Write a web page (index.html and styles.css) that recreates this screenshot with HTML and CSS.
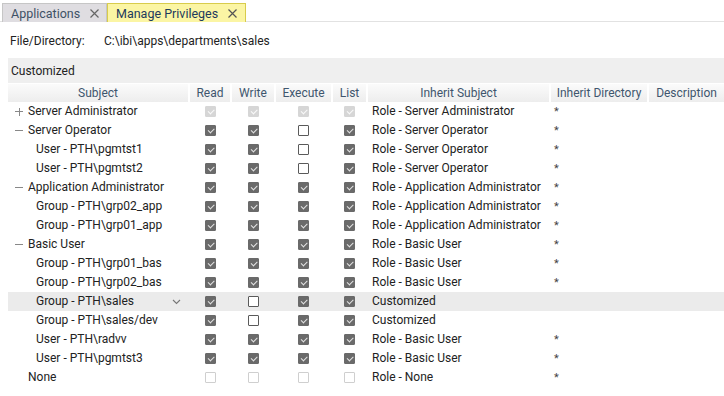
FILE: index.html
```html
<!DOCTYPE html>
<html lang="en">
<head>
    <meta charset="UTF-8">
    <title>Manage Privileges</title>
    <link rel="stylesheet" href="styles.css">
</head>
<body>
    <div class="tabs">
        <div class="tab">
            <span class="tab-label">Applications</span>
            <svg class="tab-close" width="9" height="9" viewBox="0 0 9 9"><path d="M0.5 0.5L8.5 8.5M8.5 0.5L0.5 8.5" stroke="#666" stroke-width="1.2" fill="none"/></svg>
        </div>
        <div class="tab active">
            <span class="tab-label">Manage Privileges</span>
            <svg class="tab-close" width="9" height="9" viewBox="0 0 9 9"><path d="M0.5 0.5L8.5 8.5M8.5 0.5L0.5 8.5" stroke="#555" stroke-width="1.2" fill="none"/></svg>
        </div>
    </div>

    <div class="file-row">
        <span class="file-label">File/Directory:</span>
        <span class="file-path">C:\ibi\apps\departments\sales</span>
    </div>

    <div class="panel">
        <div class="panel-title">Customized</div>

        <div class="grid head">
            <div>Subject</div>
            <div>Read</div>
            <div>Write</div>
            <div>Execute</div>
            <div>List</div>
            <div>Inherit Subject</div>
            <div>Inherit Directory</div>
            <div>Description</div>
        </div>

        <div class="grid row">
            <div class="subj lvl0"><span class="tog plus"></span>Server Administrator</div>
            <div class="c"><span class="cb dis on"></span></div>
            <div class="c"><span class="cb dis on"></span></div>
            <div class="c"><span class="cb dis on"></span></div>
            <div class="c"><span class="cb dis on"></span></div>
            <div class="inh">Role - Server Administrator</div>
            <div class="dir">*</div>
            <div></div>
        </div>
        <div class="grid row">
            <div class="subj lvl0"><span class="tog minus"></span>Server Operator</div>
            <div class="c"><span class="cb on"></span></div>
            <div class="c"><span class="cb on"></span></div>
            <div class="c"><span class="cb"></span></div>
            <div class="c"><span class="cb on"></span></div>
            <div class="inh">Role - Server Operator</div>
            <div class="dir">*</div>
            <div></div>
        </div>
        <div class="grid row">
            <div class="subj lvl1">User - PTH\pgmtst1</div>
            <div class="c"><span class="cb on"></span></div>
            <div class="c"><span class="cb on"></span></div>
            <div class="c"><span class="cb"></span></div>
            <div class="c"><span class="cb on"></span></div>
            <div class="inh">Role - Server Operator</div>
            <div class="dir">*</div>
            <div></div>
        </div>
        <div class="grid row">
            <div class="subj lvl1">User - PTH\pgmtst2</div>
            <div class="c"><span class="cb on"></span></div>
            <div class="c"><span class="cb on"></span></div>
            <div class="c"><span class="cb"></span></div>
            <div class="c"><span class="cb on"></span></div>
            <div class="inh">Role - Server Operator</div>
            <div class="dir">*</div>
            <div></div>
        </div>
        <div class="grid row">
            <div class="subj lvl0"><span class="tog minus"></span>Application Administrator</div>
            <div class="c"><span class="cb on"></span></div>
            <div class="c"><span class="cb on"></span></div>
            <div class="c"><span class="cb on"></span></div>
            <div class="c"><span class="cb on"></span></div>
            <div class="inh">Role - Application Administrator</div>
            <div class="dir">*</div>
            <div></div>
        </div>
        <div class="grid row">
            <div class="subj lvl1">Group - PTH\grp02_app</div>
            <div class="c"><span class="cb on"></span></div>
            <div class="c"><span class="cb on"></span></div>
            <div class="c"><span class="cb on"></span></div>
            <div class="c"><span class="cb on"></span></div>
            <div class="inh">Role - Application Administrator</div>
            <div class="dir">*</div>
            <div></div>
        </div>
        <div class="grid row">
            <div class="subj lvl1">Group - PTH\grp01_app</div>
            <div class="c"><span class="cb on"></span></div>
            <div class="c"><span class="cb on"></span></div>
            <div class="c"><span class="cb on"></span></div>
            <div class="c"><span class="cb on"></span></div>
            <div class="inh">Role - Application Administrator</div>
            <div class="dir">*</div>
            <div></div>
        </div>
        <div class="grid row">
            <div class="subj lvl0"><span class="tog minus"></span>Basic User</div>
            <div class="c"><span class="cb on"></span></div>
            <div class="c"><span class="cb on"></span></div>
            <div class="c"><span class="cb on"></span></div>
            <div class="c"><span class="cb on"></span></div>
            <div class="inh">Role - Basic User</div>
            <div class="dir">*</div>
            <div></div>
        </div>
        <div class="grid row">
            <div class="subj lvl1">Group - PTH\grp01_bas</div>
            <div class="c"><span class="cb on"></span></div>
            <div class="c"><span class="cb on"></span></div>
            <div class="c"><span class="cb on"></span></div>
            <div class="c"><span class="cb on"></span></div>
            <div class="inh">Role - Basic User</div>
            <div class="dir">*</div>
            <div></div>
        </div>
        <div class="grid row">
            <div class="subj lvl1">Group - PTH\grp02_bas</div>
            <div class="c"><span class="cb on"></span></div>
            <div class="c"><span class="cb on"></span></div>
            <div class="c"><span class="cb on"></span></div>
            <div class="c"><span class="cb on"></span></div>
            <div class="inh">Role - Basic User</div>
            <div class="dir">*</div>
            <div></div>
        </div>
        <div class="grid row selected">
            <div class="subj lvl1">Group - PTH\sales
                <svg class="chevron" width="9" height="6" viewBox="0 0 9 6"><path d="M1 1L4.5 4.5L8 1" stroke="#777" stroke-width="1.1" fill="none"/></svg>
            </div>
            <div class="c"><span class="cb on"></span></div>
            <div class="c"><span class="cb"></span></div>
            <div class="c"><span class="cb on"></span></div>
            <div class="c"><span class="cb on"></span></div>
            <div class="inh">Customized</div>
            <div class="dir"></div>
            <div></div>
        </div>
        <div class="grid row">
            <div class="subj lvl1">Group - PTH\sales/dev</div>
            <div class="c"><span class="cb on"></span></div>
            <div class="c"><span class="cb"></span></div>
            <div class="c"><span class="cb on"></span></div>
            <div class="c"><span class="cb on"></span></div>
            <div class="inh">Customized</div>
            <div class="dir"></div>
            <div></div>
        </div>
        <div class="grid row">
            <div class="subj lvl1">User - PTH\radvv</div>
            <div class="c"><span class="cb on"></span></div>
            <div class="c"><span class="cb on"></span></div>
            <div class="c"><span class="cb on"></span></div>
            <div class="c"><span class="cb on"></span></div>
            <div class="inh">Role - Basic User</div>
            <div class="dir">*</div>
            <div></div>
        </div>
        <div class="grid row">
            <div class="subj lvl1">User - PTH\pgmtst3</div>
            <div class="c"><span class="cb on"></span></div>
            <div class="c"><span class="cb on"></span></div>
            <div class="c"><span class="cb on"></span></div>
            <div class="c"><span class="cb on"></span></div>
            <div class="inh">Role - Basic User</div>
            <div class="dir">*</div>
            <div></div>
        </div>
        <div class="grid row">
            <div class="subj lvl0">None</div>
            <div class="c"><span class="cb dis"></span></div>
            <div class="c"><span class="cb dis"></span></div>
            <div class="c"><span class="cb dis"></span></div>
            <div class="c"><span class="cb dis"></span></div>
            <div class="inh">Role - None</div>
            <div class="dir">*</div>
            <div></div>
        </div>
    </div>
</body>
</html>
```

FILE: styles.css
```css
body {
    margin: 0;
    font-family: Roboto, "Liberation Sans", sans-serif;
    font-size: 12px;
    color: #222;
    background: #fff;
    overflow: hidden;
}

/* Tab strip */
.tabs {
    display: flex;
    height: 22px;
    box-sizing: border-box;
    padding: 3px 0 0 2px;
    border-bottom: 1px solid #e2e2e2;
}

.tab {
    display: flex;
    align-items: center;
    justify-content: space-between;
    box-sizing: border-box;
    width: 105px;
    height: 19px;
    padding: 0 7px 0 8px;
    background: #dfdde1;
    border: 1px solid #c6c6c6;
    border-bottom: none;
    color: #3e5266;
    font-size: 12.5px;
}

.tab.active {
    width: 139px;
    padding-right: 8px;
    background: #fbf5a4;
    border-color: #d8cc4c;
    color: #1e3a5c;
}

.tab-close {
    display: block;
}

/* File row */
.file-row {
    display: flex;
    box-sizing: border-box;
    height: 36px;
    padding: 11px 10px 0;
    line-height: 16px;
}

.file-label {
    width: 94px;
}

/* Privileges panel */
.panel {
    margin-left: 8px;
}

.panel-title {
    height: 25px;
    line-height: 26px;
    padding-left: 3px;
    background: #efefef;
}

.grid {
    display: grid;
    grid-template-columns: 180px 40px 42px 55px 33px 181px 96px 1fr;
    column-gap: 2px;
}

.head {
    margin-top: 1px;
    height: 18px;
}

.head > div {
    background: linear-gradient(#fbfbfb, #ededed);
    color: #3f566e;
    text-align: center;
    line-height: 18px;
    white-space: nowrap;
    overflow: hidden;
}

.row {
    height: 19px;
    line-height: 19px;
}

.row.selected {
    background: #ebebeb;
}

.row > div {
    white-space: nowrap;
}

.subj {
    display: flex;
    align-items: center;
    position: relative;
}

.lvl0 {
    padding-left: 20px;
}

.lvl1 {
    padding-left: 28px;
}

.tog {
    position: absolute;
    left: 7px;
    top: 9px;
    width: 8px;
    height: 1px;
    background: #888;
}

.tog.plus::after {
    content: "";
    position: absolute;
    left: 3.5px;
    top: -3.5px;
    width: 1px;
    height: 8px;
    background: #888;
}

.chevron {
    position: absolute;
    left: 164px;
    top: 7px;
}

.c {
    display: flex;
    align-items: center;
    justify-content: center;
}

.inh {
    padding-left: 4px;
}

.dir {
    padding-left: 3px;
    font-size: 11px;
    color: #444;
}

/* Checkboxes */
.cb {
    position: relative;
    display: block;
    width: 11px;
    height: 11px;
    box-sizing: border-box;
    border: 1px solid #5a5a5a;
    border-radius: 1px;
    background: #fff;
}

.cb.on {
    background: #6a6a6a;
    border-color: #6a6a6a;
}

.cb.on::after {
    content: "";
    position: absolute;
    left: 2px;
    top: 1.5px;
    width: 5px;
    height: 2.5px;
    border-left: 1.2px solid #e4e4e4;
    border-bottom: 1.2px solid #e4e4e4;
    transform: rotate(-45deg);
}

.cb.dis {
    border-color: #cfcfcf;
}

.cb.dis.on {
    background: #d6d6d6;
    border-color: #d6d6d6;
}

.cb.dis.on::after {
    border-color: #fafafa;
}
```
